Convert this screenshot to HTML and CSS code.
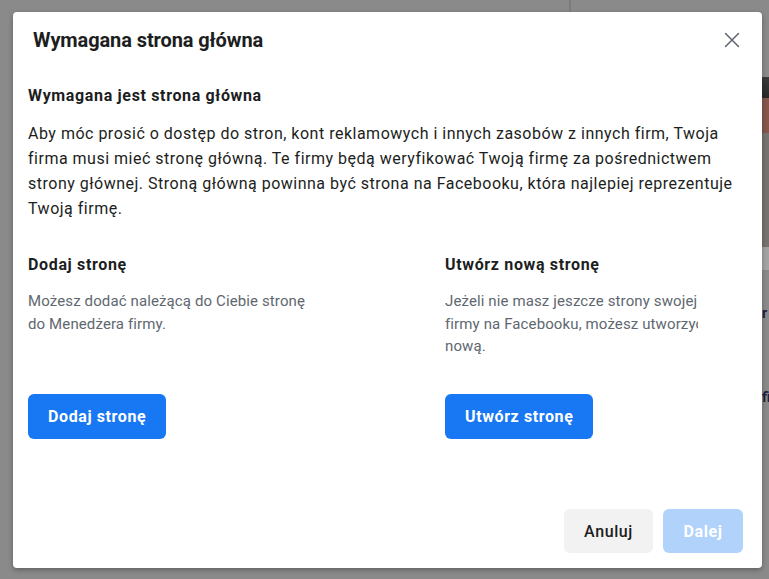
FILE: index.html
```html
<!DOCTYPE html>
<html lang="pl">
<head>
<meta charset="utf-8">
<title>Wymagana strona główna</title>
<link rel="stylesheet" href="styles.css">
</head>
<body>
<div class="page">
  <div class="top-strip"><span class="divider-line"></span></div>
  <div class="main-row">
    <div class="gutter"></div>
    <div class="modal" role="dialog" aria-labelledby="modal-title">
      <div class="modal-header">
        <h1 id="modal-title" class="modal-title">Wymagana strona główna</h1>
        <button class="close-btn" aria-label="Zamknij">
          <svg width="16" height="16" viewBox="0 0 16 16" aria-hidden="true">
            <path d="M1.5 1.5 L14.5 14.5 M14.5 1.5 L1.5 14.5" stroke="#606770" stroke-width="1.5" fill="none" stroke-linecap="round"/>
          </svg>
        </button>
      </div>
      <div class="modal-body">
        <h2 class="section-title">Wymagana jest strona główna</h2>
        <p class="intro">Aby móc prosić o dostęp do stron, kont reklamowych i innych zasobów z innych firm, Twoja firma musi mieć stronę główną. Te firmy będą weryfikować Twoją firmę za pośrednictwem strony głównej. Stroną główną powinna być strona na Facebooku, która najlepiej reprezentuje Twoją firmę.</p>
        <div class="options">
          <h3 class="option-title">Dodaj stronę</h3>
          <h3 class="option-title">Utwórz nową stronę</h3>
          <div class="option-desc"><p>Możesz dodać należącą do Ciebie stronę do Menedżera firmy.</p></div>
          <div class="option-desc clipped"><p>Jeżeli nie masz jeszcze strony swojej firmy na Facebooku, możesz utworzyć nową.</p></div>
          <div class="option-action"><button class="btn btn-primary">Dodaj stronę</button></div>
          <div class="option-action"><button class="btn btn-primary">Utwórz stronę</button></div>
        </div>
      </div>
      <div class="modal-footer">
        <button class="btn btn-secondary">Anuluj</button>
        <button class="btn btn-disabled" disabled>Dalej</button>
      </div>
    </div>
    <div class="side-strip">
      <div class="ss-grey ss-a"></div>
      <div class="ss-photo-dark"></div>
      <div class="ss-photo-red"></div>
      <div class="ss-photo-grey"></div>
      <div class="ss-light"></div>
      <div class="ss-grey ss-b"></div>
      <div class="ss-text">r</div>
      <div class="ss-grey ss-c"></div>
      <div class="ss-text">fi</div>
      <div class="ss-grey ss-d"></div>
    </div>
  </div>
</div>
</body>
</html>
```

FILE: styles.css
```css
* { box-sizing: border-box; }
html, body { margin: 0; padding: 0; }
body {
  width: 769px;
  height: 579px;
  overflow: hidden;
  background: #8a8a8a;
  font-family: Roboto, "Liberation Sans", Arial, sans-serif;
  color: #1c1e21;
}
.page { display: flex; flex-direction: column; height: 579px; }
.top-strip { height: 12px; display: flex; }
.divider-line {
  margin-left: 569px;
  width: 2px;
  height: 12px;
  background: #7c7c7c;
}
.main-row { display: flex; align-items: flex-start; }
.gutter { width: 13px; flex: none; }

.modal {
  width: 749px;
  height: 556px;
  flex: none;
  background: #fff;
  border-radius: 4px;
  box-shadow: 0 2px 5px rgba(0, 0, 0, 0.3);
  display: flex;
  flex-direction: column;
  position: relative;
  z-index: 1;
}
.modal-header {
  display: flex;
  align-items: center;
  justify-content: space-between;
  padding: 16px 20px 0 20px;
  height: 56px;
}
.modal-title {
  margin: 0;
  font-size: 20px;
  line-height: 24px;
  font-weight: 700;
  letter-spacing: -0.1px;
  align-self: flex-start;
}
.close-btn {
  border: 0;
  background: none;
  padding: 0;
  width: 16px;
  height: 16px;
  margin-top: -17px;
  margin-right: 2px;
  display: flex;
}
.modal-body {
  flex: 1;
  padding: 18px 16px 0 15px;
}
.section-title {
  margin: 0;
  font-size: 16px;
  line-height: 20px;
  font-weight: 700;
  letter-spacing: 0.65px;
}
.intro {
  margin: 15px 0 0 0;
  font-size: 16px;
  line-height: 25px;
  letter-spacing: 0.5px;
}
.options {
  display: grid;
  grid-template-columns: 417px 1fr;
  grid-template-rows: auto 1fr auto;
  margin-top: 34px;
}
.option-title {
  margin: 0;
  font-size: 16px;
  line-height: 20px;
  font-weight: 700;
  letter-spacing: 0.65px;
}
.option-desc {
  margin-top: 15px;
  width: 280px;
}
.option-desc.clipped { width: 253px; overflow: hidden; }
.option-desc p {
  margin: 0;
  width: 280px;
  font-size: 15px;
  line-height: 22.5px;
  letter-spacing: 0.12px;
  color: #606770;
}
.option-action { margin-top: 36px; }

.btn {
  border: 0;
  font-family: inherit;
  font-size: 16px;
  font-weight: 700;
  letter-spacing: 0.6px;
  border-radius: 6px;
  padding: 0 20px;
  height: 45px;
  cursor: pointer;
}
.btn-primary { background: #1877f2; color: #fff; }
.modal-footer {
  display: flex;
  justify-content: flex-end;
  gap: 10px;
  padding: 0 19px 15px 0;
}
.btn-secondary {
  background: #f2f2f2;
  color: #1c1e21;
  font-weight: 500;
  height: 44px;
  width: 89px;
  padding: 0;
}
.btn-disabled {
  background: #b0d2fb;
  color: #fff;
  height: 44px;
  width: 80px;
  padding: 0;
}

.side-strip { width: 7px; display: flex; flex-direction: column; overflow: hidden; }
.ss-grey { background: #8a8a8a; }
.ss-a { height: 65px; }
.ss-photo-dark { height: 21px; background: linear-gradient(#3a3a3a, #2a2626); }
.ss-photo-red { height: 35px; background: #84564c; }
.ss-photo-grey { height: 114px; background: #76726f; }
.ss-light { height: 23px; background: #a3a3a3; }
.ss-b { height: 36px; }
.ss-text { height: 14px; font-size: 14px; line-height: 14px; font-weight: 700; color: #1d2140; background: #8a8a8a; }
.ss-c { height: 70px; }
.ss-d { height: 120px; }
```
